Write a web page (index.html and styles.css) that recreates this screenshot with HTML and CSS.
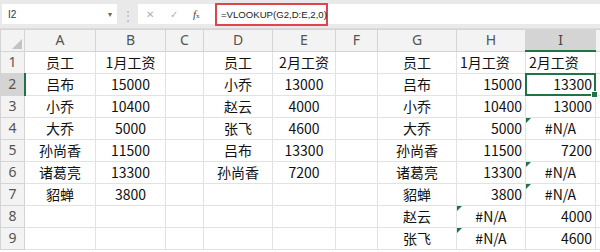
FILE: index.html
```html
<!DOCTYPE html>
<html lang="zh-CN">
<head>
    <meta charset="UTF-8">
    <title>VLOOKUP</title>
    <link rel="stylesheet" href="styles.css">
</head>
<body>
    <div class="formula-bar">
        <div class="name-box">
            <span>I2</span>
            <span class="name-arrow">&#9662;</span>
        </div>
        <div class="bar-sep">&#8942;</div>
        <div class="formula-box">
            <span class="fb-icon fb-cancel">&#x2715;</span>
            <span class="fb-icon fb-ok">&#x2713;</span>
            <span class="fb-icon fb-fx"><i>f</i><small>x</small></span>
            <div class="formula-input">=VLOOKUP(G2,D:E,2,0)</div>
        </div>
    </div>

    <table class="sheet">
        <colgroup>
            <col style="width: 24px">
            <col style="width: 71px">
            <col style="width: 70px">
            <col style="width: 38px">
            <col style="width: 69px">
            <col style="width: 63px">
            <col style="width: 42px">
            <col style="width: 79px">
            <col style="width: 69px">
            <col style="width: 70px">
            <col>
        </colgroup>
        <tr class="col-head">
            <th class="corner"><span class="corner-tri"></span></th>
            <th>A</th><th>B</th><th>C</th><th>D</th><th>E</th><th>F</th><th>G</th><th>H</th><th class="sel">I</th><th class="rest"></th>
        </tr>
        <tr>
            <th class="row-head">1</th>
            <td class="c">员工</td><td class="c">1月工资</td><td></td>
            <td class="c">员工</td><td class="c">2月工资</td><td></td>
            <td class="c">员工</td><td class="l">1月工资</td><td class="l">2月工资</td><td class="rest"></td>
        </tr>
        <tr>
            <th class="row-head sel">2</th>
            <td class="c">吕布</td><td class="c">15000</td><td></td>
            <td class="c">小乔</td><td class="c">13000</td><td></td>
            <td class="c">吕布</td><td class="r">15000</td><td class="r active">13300</td><td class="rest"></td>
        </tr>
        <tr>
            <th class="row-head">3</th>
            <td class="c">小乔</td><td class="c">10400</td><td></td>
            <td class="c">赵云</td><td class="c">4000</td><td></td>
            <td class="c">小乔</td><td class="r">10400</td><td class="r">13000</td><td class="rest"></td>
        </tr>
        <tr>
            <th class="row-head">4</th>
            <td class="c">大乔</td><td class="c">5000</td><td></td>
            <td class="c">张飞</td><td class="c">4600</td><td></td>
            <td class="c">大乔</td><td class="r">5000</td><td class="c err">#N/A</td><td class="rest"></td>
        </tr>
        <tr>
            <th class="row-head">5</th>
            <td class="c">孙尚香</td><td class="c">11500</td><td></td>
            <td class="c">吕布</td><td class="c">13300</td><td></td>
            <td class="c">孙尚香</td><td class="r">11500</td><td class="r">7200</td><td class="rest"></td>
        </tr>
        <tr>
            <th class="row-head">6</th>
            <td class="c">诸葛亮</td><td class="c">13300</td><td></td>
            <td class="c">孙尚香</td><td class="c">7200</td><td></td>
            <td class="c">诸葛亮</td><td class="r">13300</td><td class="c err">#N/A</td><td class="rest"></td>
        </tr>
        <tr>
            <th class="row-head">7</th>
            <td class="c">貂蝉</td><td class="c">3800</td><td></td>
            <td></td><td></td><td></td>
            <td class="c">貂蝉</td><td class="r">3800</td><td class="c err">#N/A</td><td class="rest"></td>
        </tr>
        <tr>
            <th class="row-head">8</th>
            <td></td><td></td><td></td>
            <td></td><td></td><td></td>
            <td class="c">赵云</td><td class="c err">#N/A</td><td class="r">4000</td><td class="rest"></td>
        </tr>
        <tr>
            <th class="row-head">9</th>
            <td></td><td></td><td></td>
            <td></td><td></td><td></td>
            <td class="c">张飞</td><td class="c err">#N/A</td><td class="r">4600</td><td class="rest"></td>
        </tr>
    </table>
</body>
</html>
```

FILE: styles.css
```css
:root {
    --green: #217346;
    --grid: #e2e2e2;
    --head-bg: #f3f3f3;
    --head-line: #d4d4d4;
    --head-text: #555;
}

* {
    margin: 0;
    padding: 0;
    box-sizing: border-box;
}

body {
    width: 600px;
    height: 252px;
    overflow: hidden;
    background: #fff;
    font-family: "Noto Sans CJK SC", "Noto Sans", sans-serif;
    color: #111;
}

/* formula bar */
.formula-bar {
    display: flex;
    align-items: center;
    height: 29px;
    padding: 4px 0 4px 2px;
    background: #e9e9e9;
    border-bottom: 1px solid #dcdcdc;
}

.name-box {
    width: 115px;
    height: 20px;
    background: #fff;
    display: flex;
    align-items: center;
    justify-content: space-between;
    padding: 0 5px 0 6px;
    font-family: "Liberation Sans", sans-serif;
    font-size: 10px;
    color: #333;
}

.name-arrow {
    font-size: 8px;
    color: #666;
}

.bar-sep {
    width: 21px;
    text-align: center;
    color: #b5b5b5;
    font-size: 12px;
}

.formula-box {
    flex: 1;
    height: 20px;
    background: #fff;
    display: flex;
    align-items: center;
    padding-left: 8px;
}

.fb-icon {
    color: #b0b0b0;
    font-size: 10px;
    font-family: "DejaVu Sans", sans-serif;
}

.fb-cancel {
    width: 24px;
}

.fb-ok {
    width: 23px;
}

.fb-fx {
    width: 22px;
    color: #444;
    font-family: "Liberation Serif", serif;
    font-size: 11px;
}

.fb-fx small {
    font-size: 7px;
}

.formula-input {
    height: 23px;
    width: 113px;
    border: 2px solid #e0454e;
    display: flex;
    align-items: center;
    padding-left: 4px;
    font-family: "Liberation Sans", sans-serif;
    font-size: 9.6px;
    color: #222;
}

/* sheet grid */
.sheet {
    table-layout: fixed;
    border-collapse: collapse;
    width: 600px;
}

.sheet td,
.sheet th {
    height: 22px;
    border: 1px solid var(--grid);
    font-size: 14px;
    font-weight: 400;
    white-space: nowrap;
    overflow: visible;
    position: relative;
    padding: 0 3px;
    line-height: 20px;
}

.col-head th {
    height: 21px;
    background: var(--head-bg);
    border-color: var(--head-line);
    color: var(--head-text);
    font-family: "Noto Sans", sans-serif;
    font-size: 14px;
    text-align: center;
}

.col-head th.sel {
    background: #d4d4d4;
    border-bottom: 2px solid var(--green);
    color: #444;
}

.row-head {
    background: var(--head-bg);
    border-color: var(--head-line) !important;
    color: var(--head-text);
    font-family: "Noto Sans", sans-serif;
    text-align: center;
}

.row-head.sel {
    background: #d4d4d4;
    border-right: 2px solid var(--green) !important;
}

.corner-tri {
    position: absolute;
    right: 2px;
    bottom: 2px;
    width: 0;
    height: 0;
    border-left: 10px solid transparent;
    border-bottom: 10px solid #c3c3c3;
}

.c {
    text-align: center;
}

.l {
    text-align: left;
}

.r {
    text-align: right;
}

.rest {
    border-right: none !important;
}

/* error indicator */
.err::before {
    content: '';
    position: absolute;
    left: 0;
    top: 0;
    border-top: 5px solid var(--green);
    border-right: 5px solid transparent;
}

/* active cell */
.active::after {
    content: '';
    position: absolute;
    left: -1px;
    top: -1px;
    right: -1px;
    bottom: -1px;
    border: 2px solid var(--green);
}

.active::before {
    content: '';
    position: absolute;
    right: -3px;
    bottom: -3px;
    width: 5px;
    height: 5px;
    background: var(--green);
    border: 1px solid #fff;
    z-index: 2;
}
```
